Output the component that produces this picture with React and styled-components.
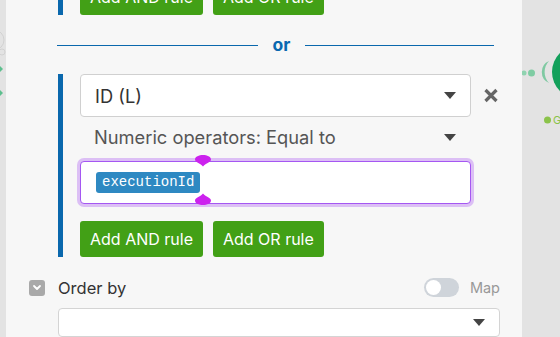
import React from "react"
import styled, { createGlobalStyle } from "styled-components"

const GlobalStyle = createGlobalStyle`
  html, body {
    margin: 0;
    padding: 0;
  }
  body {
    font-family: Inter, "Noto Sans", sans-serif;
    background: #e5e5e5;
  }
`

const Page = styled.div`
  display: flex;
  width: 560px;
  height: 337px;
  overflow: hidden;
`

const Canvas = styled.div`
  position: relative;
  flex: ${props => (props.$grow ? 1 : "none")};
  width: ${props => (props.$grow ? "auto" : "6px")};
  background: #e3e3e3;
  overflow: hidden;

  svg {
    position: absolute;
    top: 0;
    left: 0;
  }
`

const Panel = styled.div`
  width: 516px;
  background: #f7f7f7;
  display: flex;
  flex-direction: column;
  padding: 0 22px 0 23px;
  box-sizing: border-box;
`

const RuleGroup = styled.div`
  margin-left: 29px;
  border-left: 5px solid #0a68ad;
  padding-left: 17px;
  display: flex;
  flex-direction: column;
  margin-top: ${props => props.$top || 0}px;
`

const ButtonRow = styled.div`
  display: flex;
  gap: 10px;
  margin-top: ${props => props.$gap || 0}px;
`

const GreenButton = styled.button`
  height: 36px;
  padding: 0 10px;
  border: none;
  border-radius: 3px;
  background: #42a016;
  color: #fff;
  font-family: Inter, "Noto Sans", sans-serif;
  font-size: 16px;
  cursor: pointer;
`

const Divider = styled.div`
  display: flex;
  align-items: center;
  gap: 15px;
  margin: 20px 6px 19px 28px;
  height: 20px;

  &::before,
  &::after {
    content: "";
    height: 1px;
    background: #0a68ad;
  }
  &::before {
    flex: 201;
  }
  &::after {
    flex: 189;
  }
`

const OrLabel = styled.span`
  color: #0a68b0;
  font-weight: 700;
  font-size: 17.5px;
  line-height: 20px;
`

const FieldRow = styled.div`
  display: flex;
  align-items: center;
  gap: 13px;
`

const SelectBox = styled.div`
  width: 391px;
  height: ${props => (props.$plain ? 40 : 43)}px;
  box-sizing: border-box;
  display: flex;
  align-items: center;
  justify-content: space-between;
  padding: 0 14px 0 ${props => (props.$plain ? 13 : 14)}px;
  margin-bottom: ${props => (props.$plain ? 4 : 0)}px;
  background: ${props => (props.$plain ? "transparent" : "#fff")};
  border: 1px solid ${props => (props.$plain ? "transparent" : "#d0d0d0")};
  border-radius: 4px;
  color: ${props => (props.$plain ? "#555" : "#333")};
  font-size: 18.3px;
`

const Caret = styled.span`
  width: 0;
  height: 0;
  border-left: 6px solid transparent;
  border-right: 6px solid transparent;
  border-top: 7px solid #444;
`

const CloseIcon = styled.svg`
  flex: none;
`

const InputWrap = styled.div`
  position: relative;
  width: 391px;
  height: 43px;
  box-sizing: border-box;
  background: #fff;
  border: 1px solid #a557f2;
  border-radius: 4px;
  box-shadow: 0 0 0 3px #dcbff5;
  display: flex;
  align-items: center;
  padding-left: 15px;
`

const Pill = styled.span`
  background: #2e89c2;
  color: #fff;
  font-family: "Liberation Mono", "Courier New", monospace;
  font-size: 14px;
  line-height: 21px;
  height: 21px;
  padding: 0 6px;
  border-radius: 3px;
`

const Handle = styled.svg`
  position: absolute;
  left: 113px;
  top: ${props => props.$top}px;
`

const OrderRow = styled.div`
  display: flex;
  align-items: center;
  margin-top: 21px;
  height: 19px;
`

const CheckIcon = styled.span`
  width: 16px;
  height: 16px;
  border-radius: 3px;
  background: #a9a9a9;
  display: flex;
  align-items: center;
  justify-content: center;
`

const OrderLabel = styled.span`
  margin-left: 13px;
  flex: 1;
  font-size: 16.5px;
  color: #333;
`

const Toggle = styled.span`
  width: 35px;
  height: 19px;
  border-radius: 10px;
  background: #cfd4da;
  display: flex;
  align-items: center;
  padding-left: 2px;
  box-sizing: border-box;

  &::before {
    content: "";
    width: 15px;
    height: 15px;
    border-radius: 50%;
    background: #fff;
  }
`

const MapLabel = styled.span`
  margin-left: 11px;
  font-size: 14.5px;
  color: #999;
`

const BottomSelect = styled.div`
  margin: 11px 0 0 29px;
  height: 43px;
  box-sizing: border-box;
  background: #fff;
  border: 1px solid #d4d4d4;
  border-radius: 4px;
  display: flex;
  align-items: center;
  justify-content: flex-end;
  padding: 0 14px;
`

const Chevron = () => (
  <svg width="10" height="7" viewBox="0 0 10 7">
    <path d="M2 2 L5 5 L8 2" stroke="#fff" strokeWidth="1.8" fill="none" strokeLinecap="round" strokeLinejoin="round" />
  </svg>
)

export default function App() {
  return (
    <>
      <GlobalStyle />
      <Page>
        <Canvas>
          <svg width="6" height="337">
            <circle cx="-6" cy="40" r="10" fill="none" stroke="#d2d2d2" />
            <circle cx="2" cy="52" r="3" fill="none" stroke="#d2d2d2" />
            <path d="M-4 62 L3 69 L-4 76 Z" fill="#5dbf8e" />
            <path d="M-4 86 L3 93 L-4 100 Z" fill="#5dbf8e" />
          </svg>
        </Canvas>
        <Panel>
          <RuleGroup $top={-21}>
            <ButtonRow>
              <GreenButton>Add AND rule</GreenButton>
              <GreenButton>Add OR rule</GreenButton>
            </ButtonRow>
          </RuleGroup>

          <Divider>
            <OrLabel>or</OrLabel>
          </Divider>

          <RuleGroup>
            <FieldRow>
              <SelectBox>
                ID (L)
                <Caret />
              </SelectBox>
              <CloseIcon width="14" height="15" viewBox="0 0 14 15">
                <path d="M1.5 2 L12.5 13 M12.5 2 L1.5 13" stroke="#666" strokeWidth="3.2" />
              </CloseIcon>
            </FieldRow>
            <SelectBox $plain>
              Numeric operators: Equal to
              <Caret />
            </SelectBox>
            <InputWrap>
              <Pill>executionId</Pill>
              <Handle $top={-8} width="18" height="13" viewBox="0 0 18 13">
                <path d="M1 5.5 C1 -0.5 17 -0.5 17 5.5 C17 8.5 12 9 9 12.5 C6 9 1 8.5 1 5.5 Z" fill="#cc22ee" />
              </Handle>
              <Handle $top={31} width="18" height="13" viewBox="0 0 18 13">
                <path d="M1 7.5 C1 13.5 17 13.5 17 7.5 C17 4.5 12 4 9 0.5 C6 4 1 4.5 1 7.5 Z" fill="#cc22ee" />
              </Handle>
            </InputWrap>
            <ButtonRow $gap={17}>
              <GreenButton>Add AND rule</GreenButton>
              <GreenButton>Add OR rule</GreenButton>
            </ButtonRow>
          </RuleGroup>

          <OrderRow>
            <CheckIcon>
              <Chevron />
            </CheckIcon>
            <OrderLabel>Order by</OrderLabel>
            <Toggle />
            <MapLabel>Map</MapLabel>
          </OrderRow>

          <BottomSelect>
            <Caret />
          </BottomSelect>
        </Panel>
        <Canvas $grow>
          <svg width="38" height="337">
            <circle cx="2" cy="73" r="2.5" fill="#8fd3b0" />
            <circle cx="9.5" cy="73" r="3.5" fill="#7fcca3" />
            <path d="M27 61 A12 12 0 0 0 27 83 A16 16 0 0 1 27 61 Z" fill="#7fc9a2" />
            <circle cx="57" cy="72" r="27" fill="#13a05b" />
            <circle cx="25.5" cy="120" r="3.5" fill="#8bc34a" />
            <text x="31" y="124" fontSize="11" fill="#8bc34a" fontFamily="Inter, sans-serif">G</text>
          </svg>
        </Canvas>
      </Page>
    </>
  )
}
